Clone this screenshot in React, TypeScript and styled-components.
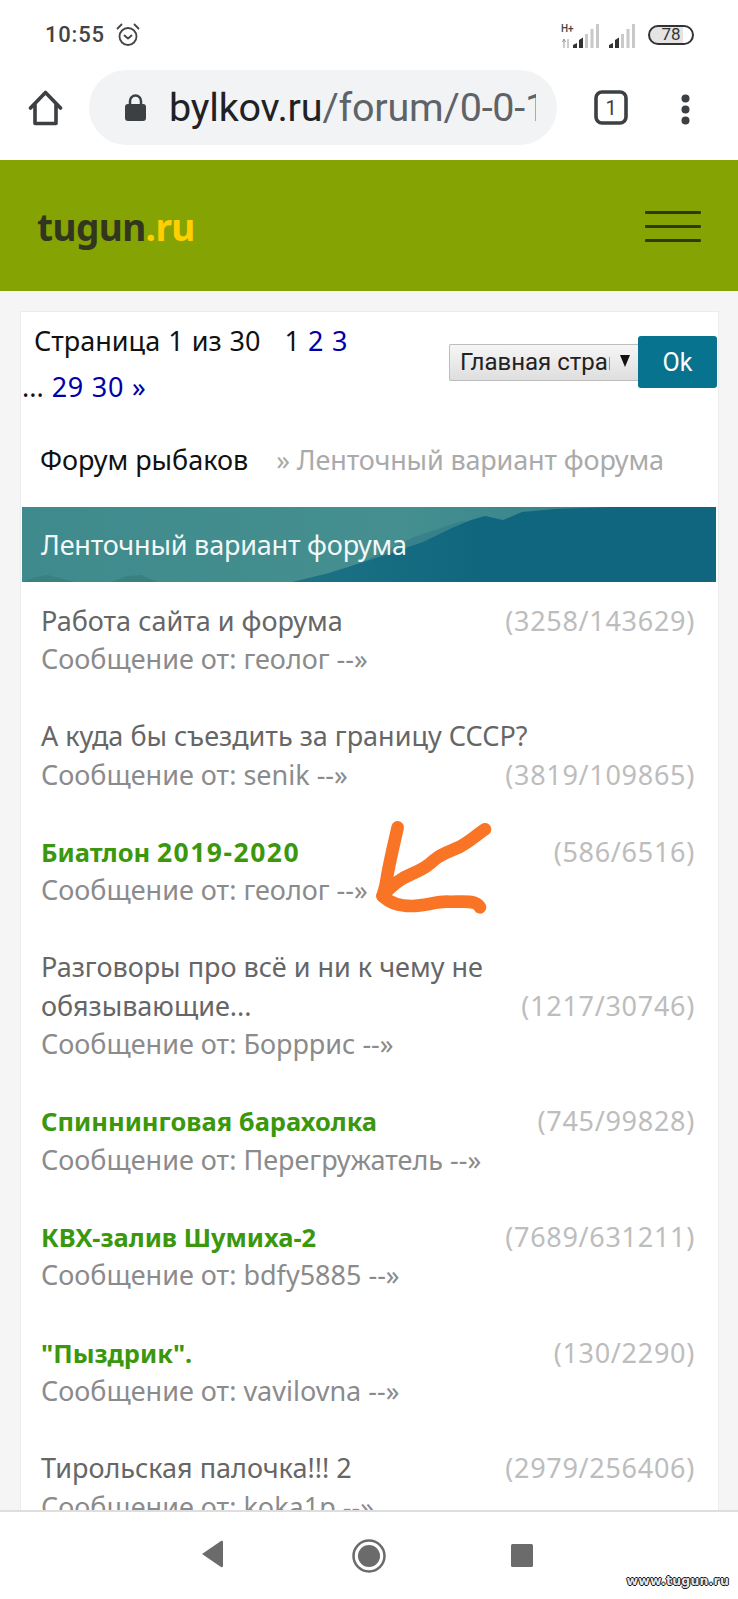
import React from "react";
import styled, { createGlobalStyle } from "styled-components";

const Global = createGlobalStyle`
  html, body { margin: 0; padding: 0; background: #fff; }
  #root { width: 738px; height: 1599px; }
  * { box-sizing: border-box; }
`;

const PT = `"Noto Sans", "Open Sans", sans-serif`;

const Screen = styled.div`
  position: relative;
  width: 738px;
  height: 1599px;
  overflow: hidden;
  display: flex;
  flex-direction: column;
  background: #f5f5f5;
  font-family: ${PT};
`;

const StatusBar = styled.div`
  height: 69px;
  flex: none;
  background: #fff;
  display: flex;
  align-items: center;
  padding: 0 44px 0 45px;
  font-family: Roboto, sans-serif;
  color: #444;
`;
const Clock = styled.span`
  font-size: 22px;
  font-weight: 500;
  letter-spacing: 0.8px;
  margin-right: 10px;
`;
const StatusRight = styled.div`
  margin-left: auto;
  display: flex;
  align-items: center;
  gap: 10px;
`;
const Battery = styled.div`
  width: 46px;
  height: 20px;
  border: 2px solid #333;
  border-radius: 10px;
  display: flex;
  align-items: center;
  justify-content: center;
  font-size: 17px;
  line-height: 1;
  color: #333;
  background: linear-gradient(90deg, #e4e4e4 0 78%, #fff 78%);
`;

const Toolbar = styled.div`
  height: 91px;
  flex: none;
  background: #fff;
  display: flex;
  align-items: flex-start;
  padding: 1px 0 0 28px;
`;
const IconSlot = styled.div<{ $w: number; $ml: number; $mt: number }>`
  flex: none;
  width: ${(p) => p.$w}px;
  margin-left: ${(p) => p.$ml}px;
  margin-top: ${(p) => p.$mt}px;
  display: flex;
`;
const UrlPill = styled.div`
  width: 468px;
  height: 75px;
  margin-left: 26px;
  flex: none;
  border-radius: 38px;
  background: #f1f3f4;
  display: flex;
  align-items: center;
  padding: 0 21px 0 36px;
`;
const UrlText = styled.div`
  margin-left: 23px;
  flex: 1;
  overflow: hidden;
  white-space: nowrap;
  font-family: Roboto, sans-serif;
  font-size: 39.5px;
  letter-spacing: -0.2px;
  color: #5f6368;
  line-height: 75px;
  b {
    font-weight: 400;
    color: #202124;
  }
`;

const Header = styled.header`
  height: 131px;
  flex: none;
  background: #85a303;
  display: flex;
  align-items: center;
  justify-content: space-between;
  padding: 0 37px 0 37px;
`;
const Logo = styled.div`
  font-family: "Noto Sans", sans-serif;
  font-weight: 700;
  font-size: 37px;
  letter-spacing: -0.6px;
  color: #33361f;
  margin-top: 1px;
  span {
    color: #ffcf00;
  }
`;
const Burger = styled.div`
  width: 56px;
  display: flex;
  flex-direction: column;
  gap: 11px;
  margin-top: 1px;
  i {
    display: block;
    height: 3px;
    background: #2f3a14;
    border-radius: 1px;
  }
`;

const Card = styled.main`
  flex: 1;
  min-height: 0;
  margin: 20px 19px 0 20px;
  background: #fff;
  border: 1px solid #ececec;
  border-bottom: none;
  padding: 0 2px 0 1px;
  overflow: hidden;
`;
const PagerRow = styled.div`
  display: flex;
  justify-content: space-between;
  align-items: flex-start;
  height: 100px;
  padding-top: 6px;
`;
const Pager = styled.div`
  width: 340px;
  text-indent: 12px;
  font-size: 27px;
  line-height: 46px;
  word-spacing: 1px;
  color: #111;
  a {
    color: #0000a8;
    text-decoration: none;
    letter-spacing: 0.6px;
  }
`;
const JumpForm = styled.div`
  display: flex;
  align-items: center;
  margin-top: 18px;
  margin-right: -1px;
  flex: none;
`;
const SelectBox = styled.div`
  position: relative;
  width: 189px;
  height: 37px;
  border: 1px solid #bdbdbd;
  border-right: none;
  border-radius: 2px 0 0 2px;
  background: linear-gradient(#f6f6f6, #dedede);
  display: flex;
  align-items: center;
  padding-left: 10px;
  font-family: Roboto, sans-serif;
  font-size: 24px;
  color: #222;
  span {
    display: block;
    width: 150px;
    overflow: hidden;
    white-space: nowrap;
  }
  i {
    position: absolute;
    right: 8px;
    top: 10px;
    border-left: 5.5px solid transparent;
    border-right: 5.5px solid transparent;
    border-top: 12px solid #111;
  }
`;
const OkButton = styled.div`
  width: 79px;
  height: 52px;
  background: #08738f;
  border-radius: 3px;
  color: #fff;
  display: flex;
  align-items: center;
  justify-content: center;
  font-family: Roboto, sans-serif;
  font-size: 25px;
`;

const Crumbs = styled.div`
  height: 95px;
  display: flex;
  align-items: center;
  padding: 0 0 0 18px;
  font-size: 27px;
  letter-spacing: -0.15px;
  white-space: nowrap;
  color: #aaa;
  b {
    font-weight: 400;
    color: #111;
    margin-right: 28px;
    letter-spacing: 0;
  }
`;
const Banner = styled.div`
  position: relative;
  height: 75px;
  background: linear-gradient(90deg, #3f8a8c 0%, #458f90 55%, #2c7a86 100%);
  display: flex;
  align-items: center;
  padding-left: 19px;
  color: #f2f8f8;
  font-size: 27px;
  letter-spacing: -0.2px;
  overflow: hidden;
  svg {
    position: absolute;
    left: 0;
    top: 0;
  }
  span {
    position: relative;
  }
`;

const List = styled.div`
  padding: 19.5px 21px 0 19px;
  display: flex;
  flex-direction: column;
  gap: 38.6px;
`;
const Row = styled.div`
  display: flow-root;
`;
const Title = styled.span<{ $hot?: boolean }>`
  font-size: ${(p) => (p.$hot ? 25.5 : 27)}px;
  line-height: 38.5px;
  font-weight: ${(p) => (p.$hot ? 700 : 400)};
  color: ${(p) => (p.$hot ? "#3b970c" : "#666")};
`;
const TitleNumber = styled.span`
  font-size: 26.5px;
  letter-spacing: 1.5px;
`;
const Sub = styled.div`
  font-size: 27px;
  line-height: 38.5px;
  color: #8b8b8b;
  white-space: nowrap;
`;
const Count = styled.span`
  float: right;
  font-size: 27px;
  line-height: 38.5px;
  letter-spacing: 0.7px;
  color: #bdbdbd;
  white-space: nowrap;
`;

const NavBar = styled.nav`
  position: absolute;
  left: 0;
  right: 0;
  bottom: 0;
  height: 89px;
  background: #fff;
  border-top: 2px solid #dedede;
  display: flex;
  justify-content: center;
  align-items: flex-start;
  padding: 26px 0 0 0;
`;
const Watermark = styled.div`
  position: absolute;
  right: 9px;
  bottom: 11px;
  font-family: "DejaVu Sans", sans-serif;
  font-weight: 700;
  font-size: 12.5px;
  line-height: 14px;
  letter-spacing: 0.2px;
  color: #e6e6e6;
  text-shadow: 1px 0 0 #111, -1px 0 0 #111, 0 1px 0 #111, 0 -1px 0 #111;
`;
const Overlay = styled.svg`
  position: absolute;
  left: 340px;
  top: 800px;
`;

type Item = { t: string[]; num?: string; by: string; c: string; hot?: boolean };
const items: Item[] = [
  { t: ["Работа сайта и форума"], by: "геолог", c: "(3258/143629)" },
  { t: ["А куда бы съездить за границу СССР?"], by: "senik", c: "(3819/109865)" },
  { t: ["Биатлон "], num: "2019-2020", by: "геолог", c: "(586/6516)", hot: true },
  { t: ["Разговоры про всё и ни к чему не", "обязывающие..."], by: "Борррис", c: "(1217/30746)" },
  { t: ["Спиннинговая барахолка"], by: "Перегружатель", c: "(745/99828)", hot: true },
  { t: ["КВХ-залив Шумиха-2"], by: "bdfy5885", c: "(7689/631211)", hot: true },
  { t: ['"Пыздрик".'], by: "vavilovna", c: "(130/2290)", hot: true },
  { t: ["Тирольская палочка!!! 2"], by: "koka1p", c: "(2979/256406)" },
];

export default function App() {
  return (
    <Screen>
      <Global />
      <StatusBar>
        <Clock>10:55</Clock>
        <svg width="26" height="26" viewBox="0 0 26 26" fill="none" stroke="#444" strokeWidth="1.8" strokeLinecap="round" strokeLinejoin="round">
          <circle cx="13" cy="14.5" r="8.5" />
          <path d="M9.5 13.5 13 16.5 16.5 13.5" />
          <path d="M2.5 6.5 6.5 2.5M23.5 6.5 19.5 2.5" />
        </svg>
        <StatusRight>
          <svg width="82" height="28" viewBox="0 0 82 28">
            <text x="5" y="11" fontFamily="Roboto, sans-serif" fontWeight="500" fontSize="10" fill="#444">H+</text>
            <path d="M8 18v9M6.500 21 8 18l1.500 3M12 18v9" stroke="#999" strokeWidth="1" fill="none" />
            <path d="M17 27v-3l4-2v5zM23 27v-8l4-2.500V27z" fill="#333" />
            <path d="M29 27V13h3v14zM34.500 27V8h3v19zM40 27V3h3v24z" fill="#c9c9c9" />
            <path d="M53 27v-3l4-2v5zM59 27v-8l4-2.500V27z" fill="#333" />
            <path d="M65 27V13h3v14zM70.500 27V8h3v19zM76 27V3h3v24z" fill="#c9c9c9" />
          </svg>
          <Battery>78</Battery>
        </StatusRight>
      </StatusBar>

      <Toolbar>
        <IconSlot $w={35} $ml={0} $mt={20}>
          <svg width="35" height="36" viewBox="0 0 35 36" fill="none" stroke="#3c4043" strokeWidth="3.6" strokeLinejoin="round" strokeLinecap="round">
            <path d="M2.500 18 17.500 2.500 32.500 18" />
            <path d="M7 15v18.500h21V15" />
          </svg>
        </IconSlot>
        <UrlPill>
          <svg width="21" height="27" viewBox="0 0 21 27">
            <path d="M5 11V7a5.500 5.500 0 0 1 11 0v4" fill="none" stroke="#3c4043" strokeWidth="2.500" />
            <rect x="0" y="10" width="21" height="17" rx="3" fill="#3c4043" />
          </svg>
          <UrlText>
            <b>bylkov.ru</b>/forum/0-0-1
          </UrlText>
        </UrlPill>
        <IconSlot $w={34} $ml={37} $mt={20}>
          <svg width="34" height="35" viewBox="0 0 34 35">
            <rect x="2" y="2" width="30" height="31" rx="6" fill="none" stroke="#3c4043" strokeWidth="3.600" />
            <text x="17" y="24.500" textAnchor="middle" fontFamily="Roboto, sans-serif" fontSize="20" fill="#3c4043">1</text>
          </svg>
        </IconSlot>
        <IconSlot $w={9} $ml={53} $mt={24}>
          <svg width="9" height="31" viewBox="0 0 9 31" fill="#3c4043">
            <circle cx="4.500" cy="4.500" r="4" />
            <circle cx="4.500" cy="15.500" r="4" />
            <circle cx="4.500" cy="26.500" r="4" />
          </svg>
        </IconSlot>
      </Toolbar>

      <Header>
        <Logo>
          tugun<span>.ru</span>
        </Logo>
        <Burger>
          <i />
          <i />
          <i />
        </Burger>
      </Header>

      <Card>
        <PagerRow>
          <Pager>
            Страница 1 из 30 &nbsp; 1 <a>2</a> <a>3</a> ... <a>29</a> <a>30</a> <a>»</a>
          </Pager>
          <JumpForm>
            <SelectBox>
              <span>Главная страница</span>
              <i />
            </SelectBox>
            <OkButton>Ok</OkButton>
          </JumpForm>
        </PagerRow>
        <Crumbs>
          <b>Форум рыбаков</b>» Ленточный вариант форума
        </Crumbs>
        <Banner>
          <svg width="694" height="75" viewBox="0 0 694 75">
            <defs>
              <linearGradient id="ridge" x1="270" x2="460" y1="0" y2="0" gradientUnits="userSpaceOnUse">
                <stop offset="0" stopColor="#1d7285" />
                <stop offset="1" stopColor="#10667e" />
              </linearGradient>
            </defs>
            <path d="M392 30 440 14 470 20 470 75 300 75Z" fill="#37818a" />
            <path d="M0 75 14 70 25 68 38 71 53 75ZM90 75 105 69 119 68 135 75Z" fill="#38817f" />
            <path d="M270 75 307 66 354 51 401 35 430 21 449 13 463 9 481 13 500 5 533 2 590 0 694 0 694 75Z" fill="url(#ridge)" />
          </svg>
          <span>Ленточный вариант форума</span>
        </Banner>
        <List>
          {items.map((it) => (
            <Row key={it.by + it.c}>
              <Title $hot={it.hot}>
                {it.t.map((line, i) => (
                  <React.Fragment key={line}>
                    {i > 0 && <br />}
                    {line}
                  </React.Fragment>
                ))}
                {it.num && <TitleNumber>{it.num}</TitleNumber>}
              </Title>
              <Count>{it.c}</Count>
              <Sub>Сообщение от: {it.by} --»</Sub>
            </Row>
          ))}
        </List>
      </Card>

      <Overlay width="180" height="120" viewBox="0 0 540 360" fill="none" stroke="#f97424" strokeWidth="38" strokeLinecap="round" strokeLinejoin="round">
        <path d="M173 82C160 140 145 200 138 250 135 265 130 278 128 288" />
        <path d="M435 88C410 105 385 128 360 140 335 152 305 160 285 178 265 198 240 212 215 222 190 232 160 248 128 288" />
        <path d="M128 288C145 305 175 318 215 318 255 318 285 305 320 305 350 306 385 302 402 308 412 312 418 318 420 322" />
      </Overlay>

      <NavBar>
        <svg width="340" height="36" viewBox="0 0 340 36" fill="#6b6b6b">
          <path d="M3 16 22 3c1-.5 2 0 2 1v24c0 1-1 1.500-2 1Z" />
          <circle cx="170" cy="18" r="15.500" fill="none" stroke="#6b6b6b" strokeWidth="2.500" />
          <circle cx="170" cy="18" r="11" />
          <rect x="312" y="6" width="22" height="23" rx="1.500" />
        </svg>
        <Watermark>www.tugun.ru</Watermark>
      </NavBar>
    </Screen>
  );
}
